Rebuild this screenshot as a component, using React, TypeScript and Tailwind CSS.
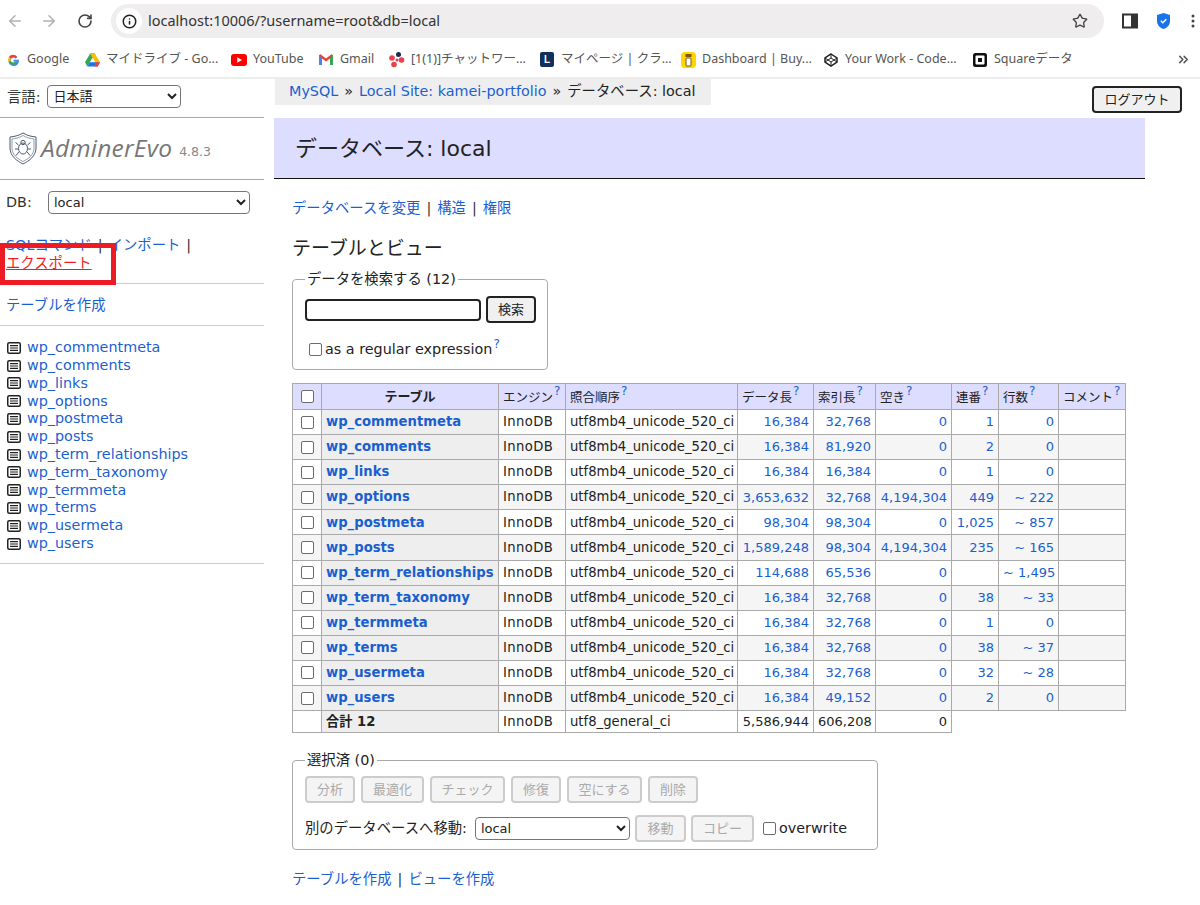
import React from "react";
import { ArrowLeft, ArrowRight, RotateCw, Info, Star, ChevronsRight } from "lucide-react";

const FONT = "font-['DejaVu_Sans','Noto_Sans_CJK_JP',sans-serif]";
const LINK = "text-[#1a5fd0]";

const rows: [string, string, string, string, string, string][] = [
  ["wp_commentmeta", "16,384", "32,768", "0", "1", "0"],
  ["wp_comments", "16,384", "81,920", "0", "2", "0"],
  ["wp_links", "16,384", "16,384", "0", "1", "0"],
  ["wp_options", "3,653,632", "32,768", "4,194,304", "449", "~ 222"],
  ["wp_postmeta", "98,304", "98,304", "0", "1,025", "~ 857"],
  ["wp_posts", "1,589,248", "98,304", "4,194,304", "235", "~ 165"],
  ["wp_term_relationships", "114,688", "65,536", "0", "", "~ 1,495"],
  ["wp_term_taxonomy", "16,384", "32,768", "0", "38", "~ 33"],
  ["wp_termmeta", "16,384", "32,768", "0", "1", "0"],
  ["wp_terms", "16,384", "32,768", "0", "38", "~ 37"],
  ["wp_usermeta", "16,384", "32,768", "0", "32", "~ 28"],
  ["wp_users", "16,384", "49,152", "0", "2", "0"],
];

const Q = () => <sup className={`${LINK} text-[12px] leading-none align-[4px] ml-[1px]`}>?</sup>;
const HQ = () => <sup className={`${LINK} text-[12px] leading-none align-[1px] ml-[1px]`}>?</sup>;

const Check = () => (
  <input type="checkbox" className="appearance-none block w-[13px] h-[13px] bg-white border border-[#6b6b6b] rounded-[2px] m-0" />
);

const TableIcon = () => (
  <svg width="14" height="12" viewBox="0 0 14 12" className="shrink-0">
    <rect x="0.75" y="0.75" width="12.5" height="10.5" rx="1.5" fill="#fff" stroke="#222" strokeWidth="1.5" />
    <path d="M3 3.6h8M3 6h8M3 8.4h8" stroke="#222" strokeWidth="1.1" />
  </svg>
);

const Sep = () => <span className="text-[#333] mx-[6px]">|</span>;

function Bookmark({ icon, label, w }: { icon: React.ReactNode; label: string; w: string }) {
  return (
    <div className={`flex items-center gap-[6px] shrink-0 ${w}`}>
      <span className="w-4 h-4 flex items-center justify-center shrink-0">{icon}</span>
      <span className="text-[12.5px] text-[#555] whitespace-nowrap font-['Noto_Sans','Noto_Sans_CJK_JP',sans-serif]">{label}</span>
    </div>
  );
}

function ChromeBar() {
  return (
    <div className="h-[79px] border-b-2 border-[#ececec] bg-white">
      <div className="h-[42px] flex items-center">
        <ArrowLeft size={18} className="ml-[6px] text-[#b0b0b0]" />
        <ArrowRight size={18} className="ml-[16px] text-[#b0b0b0]" />
        <RotateCw size={16} className="ml-[19px] text-[#444]" strokeWidth={2.4} />
        <div className="ml-[18px] w-[993px] h-[34px] rounded-full bg-[#efedee] flex items-center">
          <span className="ml-[5px] w-[26px] h-[26px] rounded-full bg-white flex items-center justify-center">
            <Info size={15} className="text-[#222]" strokeWidth={2.4} />
          </span>
          <span className="ml-[6px] -mt-[1px] text-[14.5px] text-[#333] font-['Noto_Sans',sans-serif]">localhost:10006/?username=root&amp;db=local</span>
          <Star size={16} className="ml-auto mr-[16px] text-[#444]" strokeWidth={2} />
        </div>
        <svg width="16" height="16" viewBox="0 0 16 16" className="ml-[18px]">
          <rect x="1" y="1.5" width="14" height="13" fill="#fff" stroke="#333" strokeWidth="2" />
          <rect x="9" y="1.5" width="6" height="13" fill="#333" />
        </svg>
        <svg width="15" height="18" viewBox="0 0 15 18" className="ml-[18px]">
          <path d="M7.5 1 14 3v6c0 4-3 7-6.5 8C4 16 1 13 1 9V3z" fill="#1a73e8" />
          <path d="M4.8 8.8l2 2 3.5-3.6" fill="none" stroke="#fff" strokeWidth="1.5" />
        </svg>
        <svg width="4" height="16" viewBox="0 0 4 16" className="ml-[20px] shrink-0">
          <circle cx="2" cy="3" r="1.5" fill="#444" /><circle cx="2" cy="8" r="1.5" fill="#444" /><circle cx="2" cy="13" r="1.5" fill="#444" />
        </svg>
      </div>
      <div className="h-[35px] flex items-center pl-[5px]">
        <Bookmark w="w-[79px]" label="Google" icon={
          <svg width="15" height="15" viewBox="0 0 16 16"><path d="M13.5 8.2H8v2.2h3.2a3.3 3.3 0 1 1-.9-3.6l1.6-1.6A5.6 5.6 0 1 0 13.6 8z" fill="#4285f4" /><path d="M3 5.2A5.6 5.6 0 0 1 11.9 5.2L10.3 6.8A3.3 3.3 0 0 0 5 6.8z" fill="#ea4335" /><path d="M3 5.2l2 1.6a3.3 3.3 0 0 0 0 2.4l-2 1.6a5.6 5.6 0 0 1 0-5.6z" fill="#fbbc05" /><path d="M3 10.8l2-1.6a3.3 3.3 0 0 0 5.1 1.2l1.8 1.4A5.6 5.6 0 0 1 3 10.8z" fill="#34a853" /></svg>
        } />
        <Bookmark w="w-[147px]" label="マイドライブ - Go..." icon={
          <svg width="15" height="14" viewBox="0 0 16 14"><path d="M5.5 0h5L8 5z" fill="#188038" /><path d="M5.5 0L0 9.5 2.5 14 8 4.5z" fill="#34a853" /><path d="M10.5 0L16 9.5h-5L5.5 0z" fill="#fbbc04" /><path d="M2.5 14h11L16 9.5H5z" fill="#1a73e8" /><path d="M13.5 14L16 9.5h-5l-1 4.5z" fill="#ea4335" /></svg>
        } />
        <Bookmark w="w-[87px]" label="YouTube" icon={
          <svg width="16" height="12" viewBox="0 0 16 12"><rect width="16" height="12" rx="3" fill="#f00" /><path d="M6.3 3.2v5.6L11 6z" fill="#fff" /></svg>
        } />
        <Bookmark w="w-[71px]" label="Gmail" icon={
          <svg width="14" height="11" viewBox="0 0 14 11"><path d="M0 1.2V11h3V4.5L7 7.5l4-3V11h3V1.2L12.5.2 7 4.4 1.5.2z" fill="#ea4335" /><path d="M0 1.2V11h3V4z" fill="#4285f4" /><path d="M11 4v7h3V1.2z" fill="#34a853" /></svg>
        } />
        <Bookmark w="w-[150px]" label="[1(1)]チャットワー..." icon={
          <svg width="16" height="16" viewBox="0 0 16 16"><circle cx="9.5" cy="2.5" r="2.5" fill="#1a2b4a" /><circle cx="3" cy="6" r="2.8" fill="#e8414a" /><circle cx="12.5" cy="8" r="2.8" fill="#e8414a" /><circle cx="5" cy="12.5" r="2.8" fill="#e8414a" /><circle cx="8" cy="8" r="1.5" fill="#e8414a" /></svg>
        } />
        <Bookmark w="w-[141px]" label="マイページ | クラ..." icon={
          <span className="w-[14px] h-[15px] rounded-[2px] bg-[#12305c] text-white text-[10px] font-bold leading-[15px] text-center font-['Liberation_Sans',sans-serif]">L</span>
        } />
        <Bookmark w="w-[143px]" label="Dashboard | Buy..." icon={
          <svg width="15" height="16" viewBox="0 0 15 16"><rect width="15" height="16" rx="4" fill="#ffd400" /><rect x="4.5" y="2" width="6" height="3" fill="#7a5a12" /><rect x="5" y="6" width="5" height="8" rx="1" fill="#fff" stroke="#7a5a12" /></svg>
        } />
        <Bookmark w="w-[149px]" label="Your Work - Code..." icon={
          <svg width="14" height="14" viewBox="0 0 14 14" fill="none" stroke="#222" strokeWidth="1.5"><path d="M7 1l6 4v4l-6 4-6-4V5z" /><path d="M1 5l6 4 6-4M1 9l6-4 6 4M7 1v4M7 9v4" strokeWidth="1" /></svg>
        } />
        <Bookmark w="w-[204px]" label="Squareデータ" icon={
          <svg width="14" height="14" viewBox="0 0 14 14"><rect width="14" height="14" rx="2.5" fill="#111" /><rect x="2.5" y="2.5" width="9" height="9" rx="1" fill="#fff" /><rect x="5" y="5" width="4" height="4" fill="#111" /></svg>
        } />
        <ChevronsRight size={15} className="text-[#555] shrink-0" strokeWidth={2.4} />
      </div>
    </div>
  );
}

const selectClass = "h-[23px] bg-white border border-[#767676] rounded-[4px] text-[13px] text-[#222]";

function Sidebar() {
  const tables = rows.map((r) => r[0]);
  return (
    <aside className="w-[264px] shrink-0 text-[#333] text-[14.35px]">
      <div className="h-[39px] border-b border-[#aaa] flex items-end pb-[9px] pl-[7px]">
        <span className="mr-[6px] leading-[22px]">言語:</span>
        <select className={`${selectClass} w-[134px] pl-[2px]`} defaultValue="ja"><option value="ja">日本語</option></select>
      </div>
      <div className="h-[62px] border-b border-[#aaa] flex items-center pl-[9px]">
        <svg width="28" height="33" viewBox="0 0 28 33" fill="none" stroke="#4a5a70" strokeWidth="1" className="shrink-0">
          <path d="M14 1 C19 4 23 4.5 27 5 V16 C27 24 20 29 14 32 C8 29 1 24 1 16 V5 C5 4.5 9 4 14 1Z" />
          <path d="M14 3.5 C18 6 22 6.5 25 7 V16 C25 23 19 27 14 29.5 C9 27 3 23 3 16 V7 C6 6.5 10 6 14 3.5Z" strokeWidth="0.6" />
          <ellipse cx="14" cy="16.5" rx="4.5" ry="5.5" />
          <circle cx="14" cy="10.5" r="2.2" />
          <path d="M9.5 13 6.5 10.5M9.5 17H6M9.8 20 7 23.5M18.5 13l3-2.5M18.5 17H22M18.2 20l2.8 3.5" />
        </svg>
        <span className="ml-[4px] text-[24.5px] italic text-[#777] font-['Open_Sans',sans-serif] tracking-[0.2px] leading-none">AdminerEvo</span>
        <span className="ml-[7px] mt-[7px] text-[12.5px] text-[#888]">4.8.3</span>
      </div>
      <div className="h-[45px] flex items-end pl-[6px] pb-[11px]">
        <span className="w-[42px]">DB:</span>
        <select className={`${selectClass} w-[202px] text-[12px] pl-[1px]`} defaultValue="local"><option>local</option></select>
      </div>
      <div className="relative h-[59px] border-b border-[#ccc] pl-[6px] pt-[11px] leading-[18px]">
        <div>
          <span className={LINK}>SQLコマンド</span><Sep /><span className={LINK}>インポート</span><span className="ml-[6px]">|</span>
        </div>
        <div><span className="text-[#f01c24] underline">エクスポート</span></div>
        <div className="absolute left-0 top-[18px] w-[116px] h-[42px] border-[5px] border-[#ed1c24]" />
      </div>
      <div className="h-[42px] border-b border-[#ccc] pl-[6px] pt-[2px] flex items-center">
        <span className={LINK}>テーブルを作成</span>
      </div>
      <ul className="h-[238px] border-b border-[#ccc] pl-[7px] pt-[13px]">
        {tables.map((t) => (
          <li key={t} className="h-[17.8px] flex items-center gap-[6px]">
            <TableIcon />
            <span className={LINK}>{t}</span>
          </li>
        ))}
      </ul>
    </aside>
  );
}

const btn = "h-[27px] rounded-[4px] border-2 border-[#222] bg-[#f0f0f0] text-[13px] text-[#222] leading-none";
const disabledBtn = "h-[27px] rounded-[4px] border-2 border-[#ccc] bg-[#f4f4f4] text-[13px] text-[#aaa] leading-none shrink-0";

const th = "border border-[#aaa] bg-[#ddf] text-left font-normal text-[12.5px] pl-[4px] pr-0 pt-[3px] whitespace-nowrap";
const td = "border border-[#aaa] px-[4px] text-[13.2px] whitespace-nowrap overflow-hidden";
const num = "border border-[#aaa] px-[4px] text-[13px] text-right whitespace-nowrap overflow-hidden text-[#1a5fd0]";

function DataTable() {
  return (
    <table className="table-fixed border-collapse w-[834px] text-[#222] mt-[13px]">
      <colgroup>
        <col className="w-[29px]" />
        <col className="w-[177px]" />
        <col className="w-[67px]" />
        <col className="w-[172px]" />
        <col className="w-[76px]" />
        <col className="w-[62px]" />
        <col className="w-[76px]" />
        <col className="w-[47px]" />
        <col className="w-[60px]" />
        <col className="w-[67px]" />
      </colgroup>
      <thead>
        <tr className="h-[26px]">
          <th className="border border-[#aaa] bg-[#ddf]"><span className="flex justify-center"><Check /></span></th>
          <th className="border border-[#aaa] bg-[#ddf] text-center font-bold text-[13px]">テーブル</th>
          <th className={th}>エンジン<HQ /></th>
          <th className={th}>照合順序<HQ /></th>
          <th className={th}>データ長<HQ /></th>
          <th className={th}>索引長<HQ /></th>
          <th className={th}>空き<HQ /></th>
          <th className={th}>連番<HQ /></th>
          <th className={th}>行数<HQ /></th>
          <th className={th}>コメント<HQ /></th>
        </tr>
      </thead>
      <tbody>
        {rows.map((r, i) => (
          <tr key={r[0]} className={`h-[25.1px] ${i % 2 ? "bg-[#f5f5f5]" : "bg-white"}`}>
            <td className="border border-[#aaa]"><span className="flex justify-center"><Check /></span></td>
            <td className="border border-[#aaa] bg-[#eee] px-[4px] text-[13.2px] font-bold text-[#1a5fd0] whitespace-nowrap overflow-hidden">{r[0]}</td>
            <td className={td}><span className="tracking-[0.4px]">InnoDB</span></td>
            <td className={td}>utf8mb4_unicode_520_ci</td>
            <td className={num}>{r[1]}</td>
            <td className={num}>{r[2]}</td>
            <td className={num}>{r[3]}</td>
            <td className={num}>{r[4]}</td>
            <td className={num}>{r[5]}</td>
            <td className={td}></td>
          </tr>
        ))}
        <tr className="h-[22px]">
          <td className="border border-[#aaa]"></td>
          <td className="border border-[#aaa] bg-[#eee] px-[4px] text-[13.2px] font-bold">合計 12</td>
          <td className={td}><span className="tracking-[0.4px]">InnoDB</span></td>
          <td className={td}>utf8_general_ci</td>
          <td className="border border-[#aaa] px-[4px] text-[13px] text-right">5,586,944</td>
          <td className="border border-[#aaa] px-[4px] text-[13px] text-right">606,208</td>
          <td className="border border-[#aaa] px-[4px] text-[13px] text-right">0</td>
        </tr>
      </tbody>
    </table>
  );
}

function Main() {
  return (
    <main className="flex-1 pl-[10px] text-[#222] text-[14.35px]">
      <div className="h-[39px] flex items-start">
        <div className="h-[26px] w-[436px] ml-[1px] bg-[#eee] flex items-center pl-[14px] whitespace-nowrap">
          <span className={LINK}>MySQL</span><span className="mx-[6px]">»</span>
          <span className={LINK}>Local Site: kamei-portfolio</span><span className="mx-[6px]">»</span>
          <span>データベース: local</span>
        </div>
        <button className={`${btn} w-[90px] ml-[381px] mt-[7px]`}>ログアウト</button>
      </div>
      <div className="w-[871px] h-[61px] bg-[#ddf] border-b border-[#111] flex items-center pl-[21px] text-[22px] text-[#222]">
        データベース: local
      </div>
      <div className="pl-[18px]">
        <div className="mt-[20px] h-[20px] flex items-center">
          <span className={LINK}>データベースを変更</span><Sep /><span className={LINK}>構造</span><Sep /><span className={LINK}>権限</span>
        </div>
        <h2 className="mt-[15px] h-[28px] flex items-center text-[19px] text-[#222] font-normal">テーブルとビュー</h2>
        <fieldset className="mt-[8px] w-[256px] h-[100px] border border-[#aaa] rounded-[4px] pl-[12px] pb-0">
          <legend className="px-[2px] leading-[18px]">データを検索する (12)</legend>
          <div className="flex items-center gap-[5px] mt-[8px]">
            <input className="w-[176px] h-[22px] border-2 border-[#222] rounded-[4px] bg-white" />
            <button className={`${btn} w-[50px]`}>検索</button>
          </div>
          <label className="flex items-center mt-[16px] ml-[4px]">
            <Check /><span className="ml-[3px]">as a regular expression</span><Q />
          </label>
        </fieldset>
        <DataTable />
        <fieldset className="mt-[18px] w-[586px] h-[99px] border border-[#aaa] rounded-[4px] pl-[12px]">
          <legend className="px-[2px] leading-[18px]">選択済 (0)</legend>
          <div className="flex gap-[6px] mt-[7px]">
            <button disabled className={`${disabledBtn} w-[50px]`}>分析</button>
            <button disabled className={`${disabledBtn} w-[63px]`}>最適化</button>
            <button disabled className={`${disabledBtn} w-[75px]`}>チェック</button>
            <button disabled className={`${disabledBtn} w-[50px]`}>修復</button>
            <button disabled className={`${disabledBtn} w-[75px]`}>空にする</button>
            <button disabled className={`${disabledBtn} w-[50px]`}>削除</button>
          </div>
          <div className="flex items-center mt-[12px]">
            <span className="whitespace-nowrap">別のデータベースへ移動:</span>
            <select className={`${selectClass} w-[155px] ml-[8px] text-[12px] pl-[1px]`} defaultValue="local"><option>local</option></select>
            <button disabled className={`${disabledBtn} w-[51px] ml-[5px]`}>移動</button>
            <button disabled className={`${disabledBtn} w-[63px] ml-[5px]`}>コピー</button>
            <span className="ml-[9px]"><Check /></span>
            <span className="ml-[3px]">overwrite</span>
          </div>
        </fieldset>
        <div className="mt-[20px] h-[20px] flex items-center">
          <span className={LINK}>テーブルを作成</span><Sep /><span className={LINK}>ビューを作成</span>
        </div>
      </div>
    </main>
  );
}

export default function App() {
  return (
    <div className={`w-[1200px] h-[905px] bg-white overflow-hidden ${FONT}`}>
      <ChromeBar />
      <div className="flex">
        <Sidebar />
        <Main />
      </div>
    </div>
  );
}
